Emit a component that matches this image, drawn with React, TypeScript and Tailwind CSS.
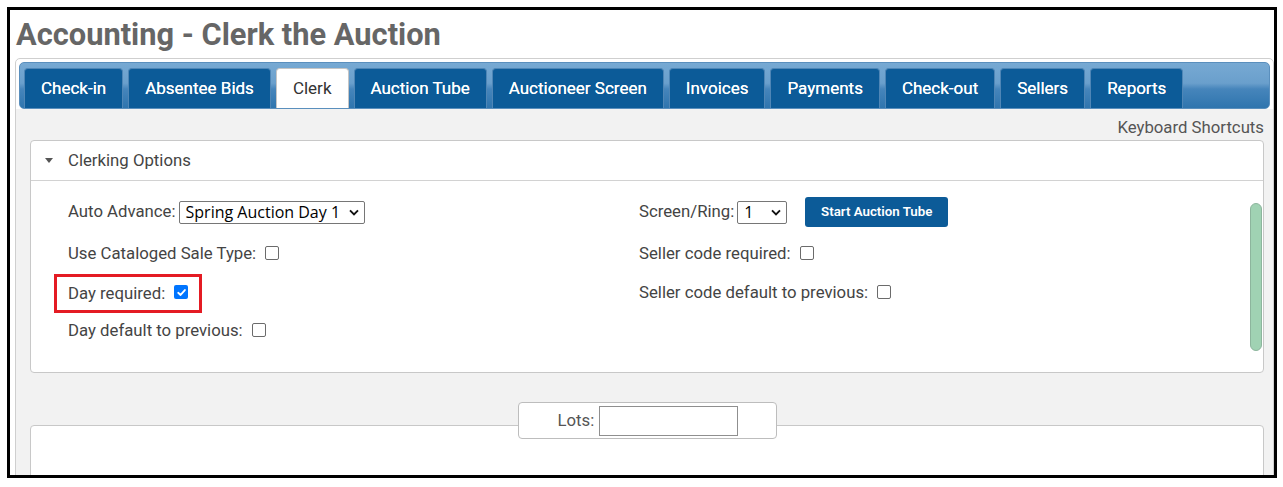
import React from 'react'

const tabs = [
  'Check-in',
  'Absentee Bids',
  'Clerk',
  'Auction Tube',
  'Auctioneer Screen',
  'Invoices',
  'Payments',
  'Check-out',
  'Sellers',
  'Reports',
]

const activeTab = 'Clerk'

function Checkbox({ checked = false }: { checked?: boolean }) {
  if (checked) {
    return (
      <span className="ml-[9px] -mt-[3px] inline-flex h-[14px] w-[14px] items-center justify-center rounded-[2px] bg-[#0075ff]">
        <svg viewBox="0 0 12 12" className="h-[11px] w-[11px]">
          <path d="M2.4 6.3 L5 8.7 L9.7 3.3" fill="none" stroke="white" strokeWidth="2" strokeLinecap="round" strokeLinejoin="round" />
        </svg>
      </span>
    )
  }
  return <span className="ml-[9px] -mt-[3px] inline-block h-[14px] w-[14px] rounded-[2px] border border-[#6b6b6b] bg-white" />
}

function Chevron() {
  return (
    <svg width="10" height="7" viewBox="0 0 10 7">
      <path d="M1 1.3 L5 5.3 L9 1.3" fill="none" stroke="#111" strokeWidth="1.9" />
    </svg>
  )
}

// fake native <select> box: value plus the chevron on the right
function SelectBox({ value, width }: { value: string; width: string }) {
  return (
    <div className={`${width} flex h-[23px] items-center justify-between rounded-[2px] border border-[#767676] bg-white pl-[6px] pr-[5px] font-['Open_Sans',sans-serif] text-[16px] text-black`}>
      <span>{value}</span>
      <Chevron />
    </div>
  )
}

function CheckRow({ label, checked, className = '' }: { label: string; checked?: boolean; className?: string }) {
  return (
    <div className={`flex h-[24px] items-center ${className}`}>
      <span>{label}</span>
      <Checkbox checked={checked} />
    </div>
  )
}

export default function App() {
  return (
    <div className="h-[487px] w-[1283px] bg-white pl-[7px] pt-[7px] font-['Roboto',sans-serif]">
      <div className="h-[471px] w-[1270px] overflow-hidden border-[3px] border-black bg-white">
        <h1 className="ml-[6px] mt-[7px] text-[30.8px] font-bold leading-[36px] text-[#666]">
          Accounting - Clerk the Auction
        </h1>

        <div className="ml-[5px] mt-[5px] rounded-[5px] border border-[#cfcfcf] bg-white">
          {/* tab strip */}
          <div className="mx-[3px] mt-[3px] flex gap-[5px] rounded-[5px] border border-[#5a8fbd] bg-[linear-gradient(to_bottom,#77a9d3_0%,#6a9fcc_45%,#4685bb_58%,#2f75ae_100%)] px-[4px] pt-[5px]">
            {tabs.map(t =>
              t === activeTab ? (
                <div key={t} className="flex h-[40px] items-center rounded-t-[4px] border border-b-0 border-[#c5c5c5] bg-white px-[16px] text-[17px] text-[#333]">
                  {t}
                </div>
              ) : (
                <div key={t} className="flex h-[40px] items-center rounded-t-[4px] border border-b-0 border-[#4f86b6] bg-[#0c5b98] px-[16px] text-[17px] text-white [text-shadow:0_0_0.4px_white]">
                  {t}
                </div>
              )
            )}
          </div>

          <div className="bg-[#f2f2f2] pl-[14px] pr-[9px] pt-[8px]">
            <div className="text-right text-[16.75px] leading-[20px] text-[#555]">Keyboard Shortcuts</div>

            {/* clerking options panel */}
            <div className="mt-[3px] rounded-[4px] border border-[#c8c8c8] bg-white text-[16.75px] text-[#444]">
              <div className="flex h-[40px] items-center border-b border-[#d2d2d2] pl-[14px]">
                <svg width="8" height="5" viewBox="0 0 8 5">
                  <path d="M0 0 H8 L4 5 Z" fill="#555" />
                </svg>
                <span className="ml-[15px]">Clerking Options</span>
              </div>

              <div className="flex h-[191px]">
                <div className="flex flex-1 pl-[37px] pt-[16px]">
                  <div className="w-[571px]">
                    <div className="flex h-[30px] items-center">
                      <span>Auto Advance:</span>
                      <div className="ml-[3px]">
                        <SelectBox value="Spring Auction Day 1" width="w-[186px]" />
                      </div>
                    </div>
                    <CheckRow label="Use Cataloged Sale Type:" className="mt-[15px]" />
                    <div className="-ml-[14px] mt-[8px] flex h-[39px] w-[148px] items-center border-[3px] border-[#e41b23] pl-[11px]">
                      <span>Day required:</span>
                      <Checkbox checked />
                    </div>
                    <CheckRow label="Day default to previous:" className="mt-[6px]" />
                  </div>

                  <div className="flex-1">
                    <div className="flex h-[30px] items-center">
                      <span>Screen/Ring:</span>
                      <div className="ml-[3px]">
                        <SelectBox value="1" width="w-[50px]" />
                      </div>
                      <button className="ml-[18px] h-[30px] w-[143px] rounded-[3px] bg-[#0c5b98] text-[13.3px] font-semibold text-white">
                        Start Auction Tube
                      </button>
                    </div>
                    <CheckRow label="Seller code required:" className="mt-[15px]" />
                    <CheckRow label="Seller code default to previous:" className="mt-[15px]" />
                  </div>
                </div>

                {/* scrollbar */}
                <div className="w-[13px] pr-[1px] pt-[22px]">
                  <div className="h-[148px] w-[12px] rounded-full border border-[#8db59d] bg-[#a0d2b3]" />
                </div>
              </div>
            </div>

            {/* lots entry, sitting on the top edge of the panel below */}
            <div className="relative z-10 mx-auto mt-[29px] flex h-[37px] w-[259px] items-center rounded-[4px] border border-[#bdbdbd] bg-white pl-[39px]">
              <span className="text-[16.75px] text-[#555]">Lots:</span>
              <input className="ml-[5px] h-[30px] w-[139px] border border-[#8f8f8f] bg-white" />
            </div>
            <div className="-mt-[14px] h-[120px] rounded-t-[4px] border border-[#c8c8c8] bg-white" />
          </div>
        </div>
      </div>
    </div>
  )
}
